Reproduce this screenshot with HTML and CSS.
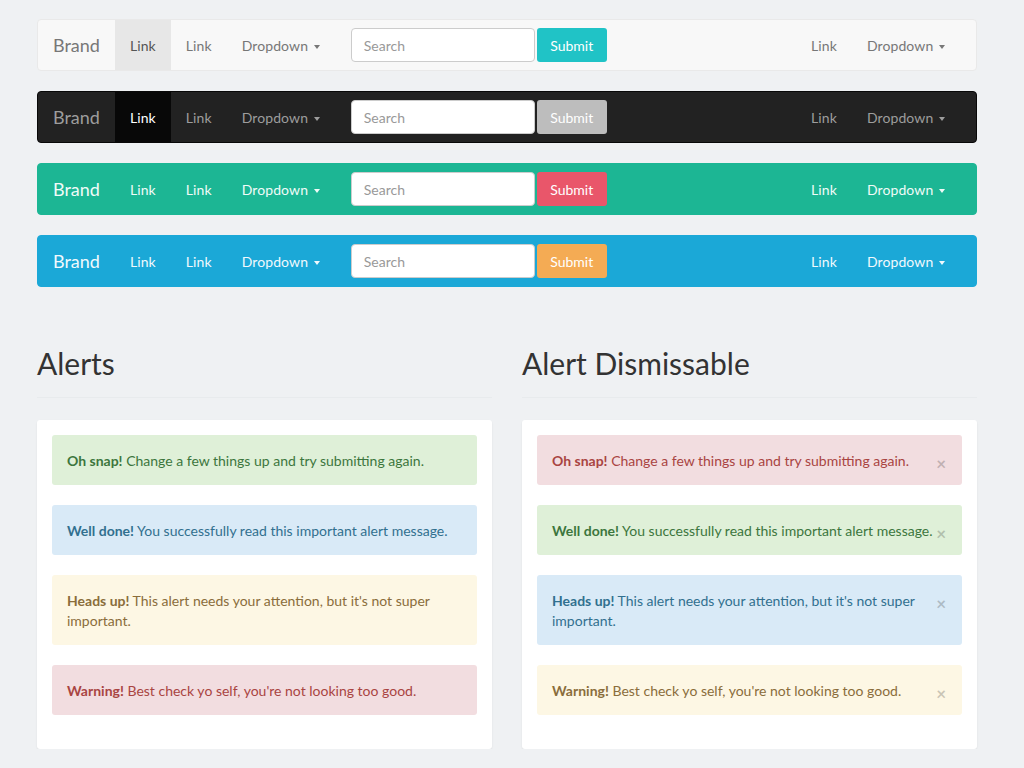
FILE: index.html
```html
<!DOCTYPE html>
<html>
<head>
<meta charset="utf-8">
<link rel="stylesheet" href="styles.css">
</head>
<body>
<div class="container">
  <nav class="navbar nb-default">
    <span class="brand">Brand</span>
    <a class="nav-link active">Link</a>
    <a class="nav-link">Link</a>
    <a class="nav-link">Dropdown <span class="caret"></span></a>
    <form class="nav-form">
      <input class="search" type="text" placeholder="Search">
      <button class="btn btn-teal" type="button">Submit</button>
    </form>
    <div class="nav-right">
      <a class="nav-link">Link</a>
      <a class="nav-link">Dropdown <span class="caret"></span></a>
    </div>
  </nav>
  <nav class="navbar nb-dark">
    <span class="brand">Brand</span>
    <a class="nav-link active">Link</a>
    <a class="nav-link">Link</a>
    <a class="nav-link">Dropdown <span class="caret"></span></a>
    <form class="nav-form">
      <input class="search" type="text" placeholder="Search">
      <button class="btn btn-gray" type="button">Submit</button>
    </form>
    <div class="nav-right">
      <a class="nav-link">Link</a>
      <a class="nav-link">Dropdown <span class="caret"></span></a>
    </div>
  </nav>
  <nav class="navbar nb-green">
    <span class="brand">Brand</span>
    <a class="nav-link">Link</a>
    <a class="nav-link">Link</a>
    <a class="nav-link">Dropdown <span class="caret"></span></a>
    <form class="nav-form">
      <input class="search" type="text" placeholder="Search">
      <button class="btn btn-red" type="button">Submit</button>
    </form>
    <div class="nav-right">
      <a class="nav-link">Link</a>
      <a class="nav-link">Dropdown <span class="caret"></span></a>
    </div>
  </nav>
  <nav class="navbar nb-blue">
    <span class="brand">Brand</span>
    <a class="nav-link">Link</a>
    <a class="nav-link">Link</a>
    <a class="nav-link">Dropdown <span class="caret"></span></a>
    <form class="nav-form">
      <input class="search" type="text" placeholder="Search">
      <button class="btn btn-orange" type="button">Submit</button>
    </form>
    <div class="nav-right">
      <a class="nav-link">Link</a>
      <a class="nav-link">Dropdown <span class="caret"></span></a>
    </div>
  </nav>

  <div class="row">
    <section class="col">
      <h1 class="page-header">Alerts</h1>
      <div class="panel">
        <div class="alert a-green"><strong>Oh snap!</strong> Change a few things up and try submitting again.</div>
        <div class="alert a-blue"><strong>Well done!</strong> You successfully read this important alert message.</div>
        <div class="alert a-yellow"><strong>Heads up!</strong> This alert needs your attention, but it's not super important.</div>
        <div class="alert a-red"><strong>Warning!</strong> Best check yo self, you're not looking too good.</div>
      </div>
    </section>
    <section class="col">
      <h1 class="page-header">Alert Dismissable</h1>
      <div class="panel">
        <div class="alert dismiss a-red"><span class="close">×</span><strong>Oh snap!</strong> Change a few things up and try submitting again.</div>
        <div class="alert dismiss a-green"><span class="close">×</span><strong>Well done!</strong> You successfully read this important alert message.</div>
        <div class="alert dismiss a-blue"><span class="close">×</span><strong>Heads up!</strong> This alert needs your attention, but it's not super important.</div>
        <div class="alert dismiss a-yellow"><span class="close">×</span><strong>Warning!</strong> Best check yo self, you're not looking too good.</div>
      </div>
    </section>
  </div>
</div>
</body>
</html>
```
FILE: styles.css
```css
* { box-sizing: border-box; }
html, body { margin: 0; padding: 0; }
body {
  background: #eff1f3;
  font-family: Lato, "Open Sans", "Liberation Sans", sans-serif;
  font-size: 14px;
  line-height: 20px;
  color: #333;
}
.container {
  width: 940px;
  margin-left: 37px;
  padding-top: 19px;
}
.navbar {
  display: flex;
  align-items: flex-start;
  height: 52px;
  border: 1px solid transparent;
  border-radius: 4px;
  margin-bottom: 20px;
}
.brand {
  padding: 15px 15px;
  font-size: 18px;
  line-height: 20px;
}
.nav-link {
  display: flex;
  align-items: center;
  padding: 16px 15px 14px;
  font-size: 14px;
  letter-spacing: 0.1px;
  line-height: 20px;
  height: 50px;
  cursor: pointer;
  white-space: pre;
}
.caret {
  display: inline-block;
  width: 0;
  height: 0;
  margin-left: 2px;
  margin-top: 1px;
  border-top: 4px solid;
  border-left: 3.5px solid transparent;
  border-right: 3.5px solid transparent;
}
.nav-form {
  display: flex;
  gap: 2px;
  padding: 8px 15px 8px 16px;
  margin: 0;
}
.search {
  width: 184px;
  height: 34px;
  border: 1px solid #ccc;
  border-radius: 4px;
  padding: 6px 12px;
  font-family: inherit;
  font-size: 14px;
  color: #555;
  background: #fff;
  outline: none;
}
.search::placeholder { color: #999; }
.btn {
  width: 70px;
  height: 34px;
  border: 0;
  border-radius: 3px;
  font-family: inherit;
  font-size: 14px;
  color: #fff;
  padding: 0;
}
.btn-teal { background: #20c3c6; }
.btn-gray { background: #bdbdbd; }
.btn-red { background: #e9566a; }
.btn-orange { background: #f4ab54; }
.nav-right {
  display: flex;
  margin-left: auto;
  padding-right: 16px;
}

.nb-default { background: #f8f8f8; border-color: #e9e9e9; }
.nb-default .brand, .nb-default .nav-link { color: #777; }
.nb-default .nav-link.active { background: #e7e7e7; color: #555; }

.nb-dark { background: #222; border-color: #080808; }
.nb-dark .brand, .nb-dark .nav-link { color: #9d9d9d; }
.nb-dark .nav-link.active { background: #080808; color: #fff; }

.nb-green { background: #1cb694; border-color: #1cb694; }
.nb-green .brand, .nb-green .nav-link { color: #f0fbf8; }

.nb-blue { background: #1ba8d7; border-color: #1ba8d7; }
.nb-blue .brand, .nb-blue .nav-link { color: #f0f9fd; }

.row {
  display: grid;
  grid-template-columns: 455px 455px;
  column-gap: 30px;
}
.page-header {
  margin: 40px 0 22px;
  padding-bottom: 17px;
  border-bottom: 1px solid #e8ebed;
  font-size: 30px;
  font-weight: 400;
  line-height: 33px;
  color: #333;
}
.panel {
  background: #fff;
  border-radius: 3px;
  box-shadow: 0 1px 2px rgba(0,0,0,0.08);
  padding: 15px 15px 14px;
}
.alert {
  position: relative;
  padding: 16px 15px 14px;
  margin-bottom: 20px;
  border-radius: 3px;
  font-size: 14px;
  line-height: 20px;
}
.alert strong { font-weight: 700; }
.alert.dismiss { padding-right: 28px; }
.close {
  position: absolute;
  right: 16px;
  top: 19px;
  font-size: 17px;
  font-weight: 700;
  line-height: 20px;
  color: #000;
  opacity: 0.2;
}
.a-green { background: #dff0d8; color: #3c763d; }
.a-blue { background: #d9eaf7; color: #31708f; }
.a-yellow { background: #fdf7e4; color: #8a6d3b; }
.a-red { background: #f2dde0; color: #a94442; }
```
